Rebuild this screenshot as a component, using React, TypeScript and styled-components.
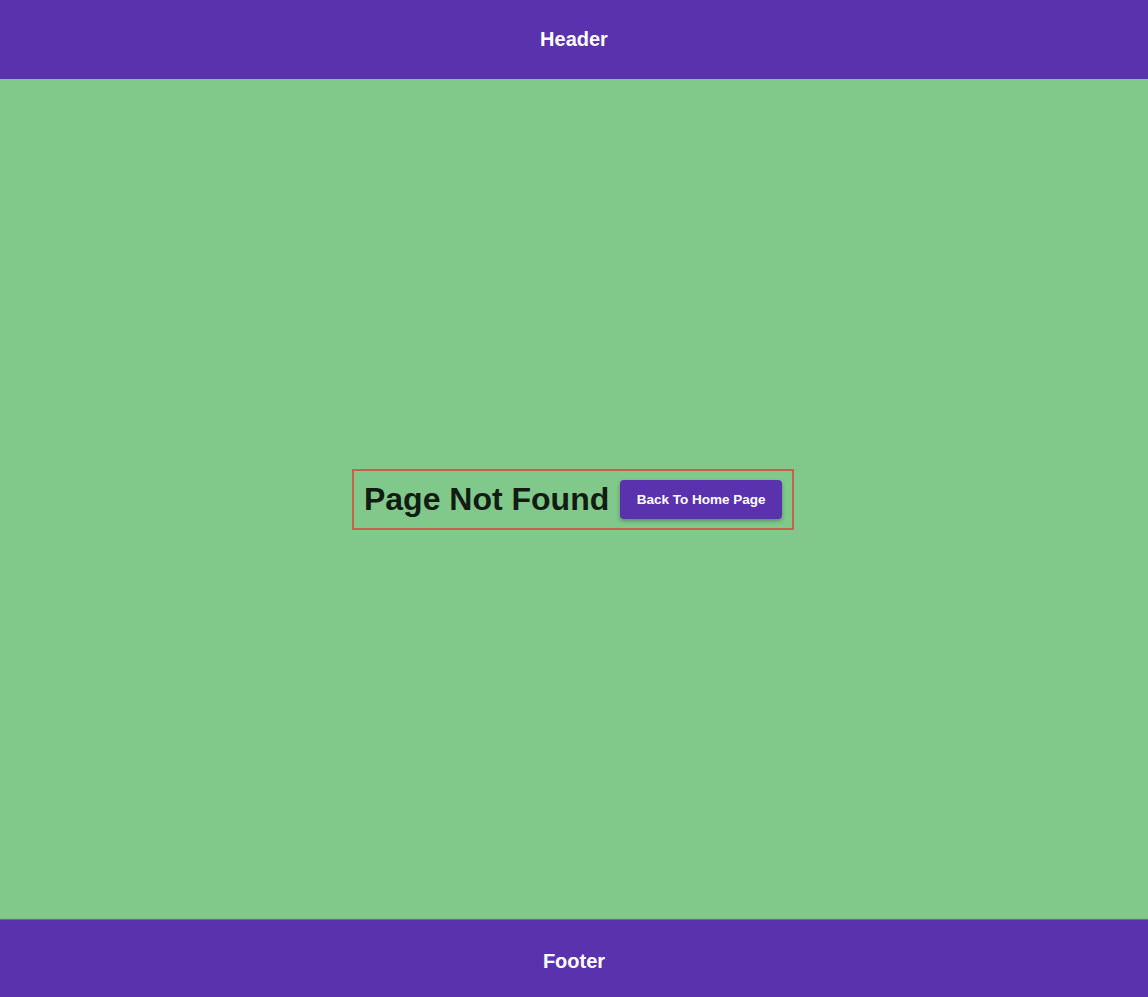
import React from 'react'
import styled, { createGlobalStyle } from 'styled-components'

const GlobalStyle = createGlobalStyle`
  html, body {
    margin: 0;
    padding: 0;
    height: 100%;
  }
  body {
    font-family: 'Liberation Sans', Arial, Helvetica, sans-serif;
  }
  #root {
    height: 100%;
  }
`

const Page = styled.div`
  display: flex;
  flex-direction: column;
  min-height: 997px;
  background-color: #81c98a;
`

const Bar = styled.div<{ $height: number; $offset?: number; $shadow?: boolean }>`
  height: ${(p) => p.$height}px;
  box-sizing: border-box;
  padding-top: ${(p) => p.$offset ?? 0}px;
  flex-shrink: 0;
  display: flex;
  align-items: center;
  justify-content: center;
  background-color: #5a32ae;
  color: #fff;
  font-size: 20px;
  font-weight: 700;
  position: relative;
  z-index: 1;
  box-shadow: ${(p) => (p.$shadow ? '0 -1px 1px rgba(0, 0, 0, 0.35)' : 'none')};
`

const Main = styled.main`
  flex: 1;
  display: flex;
  align-items: center;
  justify-content: center;
`

const NotFoundBox = styled.div`
  display: flex;
  align-items: center;
  gap: 11px;
  padding: 9px 10px;
  margin-right: 2px;
  border: 2px solid #c5624c;
`

const Title = styled.h1`
  margin: 0;
  font-size: 32px;
  font-weight: 700;
  color: #121c12;
  line-height: 37px;
`

const HomeButton = styled.button`
  height: 39px;
  padding: 0 16.5px;
  border: none;
  border-radius: 4px;
  background-color: #5a32ae;
  color: #fff;
  font-family: 'Liberation Sans', Arial, sans-serif;
  font-size: 13.5px;
  font-weight: 700;
  cursor: pointer;
  box-shadow: 0 2px 4px rgba(0, 0, 0, 0.3);
`

const App: React.FC = () => {
  return (
    <>
      <GlobalStyle />
      <Page>
        <Bar $height={79}>Header</Bar>
        <Main>
          <NotFoundBox>
            <Title>Page Not Found</Title>
            <HomeButton>Back To Home Page</HomeButton>
          </NotFoundBox>
        </Main>
        <Bar $height={77} $offset={5} $shadow>
          Footer
        </Bar>
      </Page>
    </>
  )
}

export default App
